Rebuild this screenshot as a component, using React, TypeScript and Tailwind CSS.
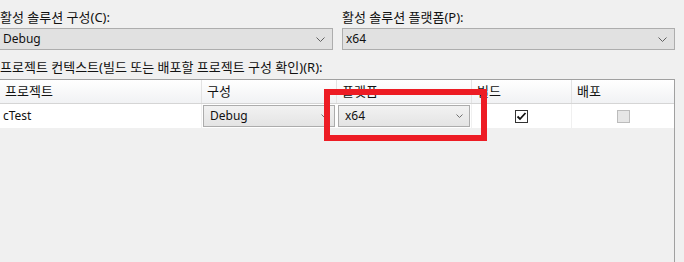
const Chevron = ({ small }: { small?: boolean }) =>
  small ? (
    <svg width="7" height="4" viewBox="0 0 7 4" className="shrink-0">
      <path d="M0.5 0.5 L3.5 3.5 L6.5 0.5" fill="none" stroke="#707070" strokeWidth="1" />
    </svg>
  ) : (
    <svg width="9" height="5" viewBox="0 0 9 5" className="shrink-0">
      <path d="M0.5 0.5 L4.5 4.5 L8.5 0.5" fill="none" stroke="#606060" strokeWidth="1" />
    </svg>
  );

const Select = ({ value }: { value: string }) => (
  <div className="h-[22px] flex items-center justify-between bg-[#e1e1e1] border border-[#adadad] pl-[3px] pr-[7px]">
    <span>{value}</span>
    <Chevron />
  </div>
);

const CellSelect = ({ value }: { value: string }) => (
  <div className="ml-px w-[132px] h-[22px] flex items-center justify-between border border-[#acacac] bg-gradient-to-b from-[#f2f2f2] to-[#e4e4e4] pl-[6px] pr-[6px]">
    <span>{value}</span>
    <Chevron small />
  </div>
);

const HeaderCell = ({ label, w }: { label: string; w: string }) => (
  <div className={`${w} h-full flex items-center pl-[5px] border-r border-[#e3e3e3] text-[13px]`}>{label}</div>
);

export default function App() {
  return (
    <div className="relative h-[262px] w-[684px] overflow-hidden bg-[#f0f0f0] text-[12px] text-[#111] font-['Noto_Sans','Noto_Sans_CJK_KR',sans-serif] flex flex-col pt-[9px]">
      <div className="flex -ml-px pr-[9px] gap-[9px]">
        <div className="w-[334px]">
          <div className="h-[16px] leading-[16px] mb-[3px] pl-px text-[13px]">활성 솔루션 구성(C):</div>
          <Select value="Debug" />
        </div>
        <div className="flex-1">
          <div className="h-[16px] leading-[16px] mb-[3px] text-[13px]">활성 솔루션 플랫폼(P):</div>
          <Select value="x64" />
        </div>
      </div>

      <div className="h-[16px] leading-[16px] mt-[9px] mb-[4px] text-[13px]">
        프로젝트 컨텍스트(빌드 또는 배포할 프로젝트 구성 확인)(R):
      </div>

      <div className="flex-1 w-[675px] border-t border-r border-[#a0a0a0] flex flex-col">
        <div className="h-[24px] flex bg-gradient-to-b from-white to-[#f1f2f4] border-b border-[#d5d5d5]">
          <HeaderCell label="프로젝트" w="w-[202px]" />
          <HeaderCell label="구성" w="w-[135px]" />
          <HeaderCell label="플랫폼" w="w-[135px]" />
          <HeaderCell label="빌드" w="w-[100px]" />
          <div className="flex-1 h-full flex items-center pl-[5px] text-[13px]">배포</div>
        </div>
        <div className="h-[24px] flex bg-white">
          <div className="w-[202px] flex items-center pl-[3px] border-r border-[#f0f0f0]">cTest</div>
          <div className="w-[135px] flex items-center">
            <CellSelect value="Debug" />
          </div>
          <div className="w-[135px] flex items-center border-r border-[#f0f0f0]">
            <CellSelect value="x64" />
          </div>
          <div className="w-[100px] flex items-center justify-center border-r border-[#f0f0f0]">
            <div className="w-[13px] h-[13px] border border-[#333333] bg-white flex items-center justify-center">
              <svg width="11" height="11" viewBox="0 0 11 11">
                <path d="M1.5 5.5 L4 8 L9.5 2" fill="none" stroke="#111111" strokeWidth="1.8" />
              </svg>
            </div>
          </div>
          <div className="flex-1 flex items-center justify-center">
            <div className="w-[13px] h-[13px] border border-[#bcbcbc] bg-[#e6e6e6]" />
          </div>
        </div>
      </div>

      <div className="absolute left-[324px] top-[89px] w-[163px] h-[52px] border-[6px] border-[#ed1c24]" />
    </div>
  );
}
